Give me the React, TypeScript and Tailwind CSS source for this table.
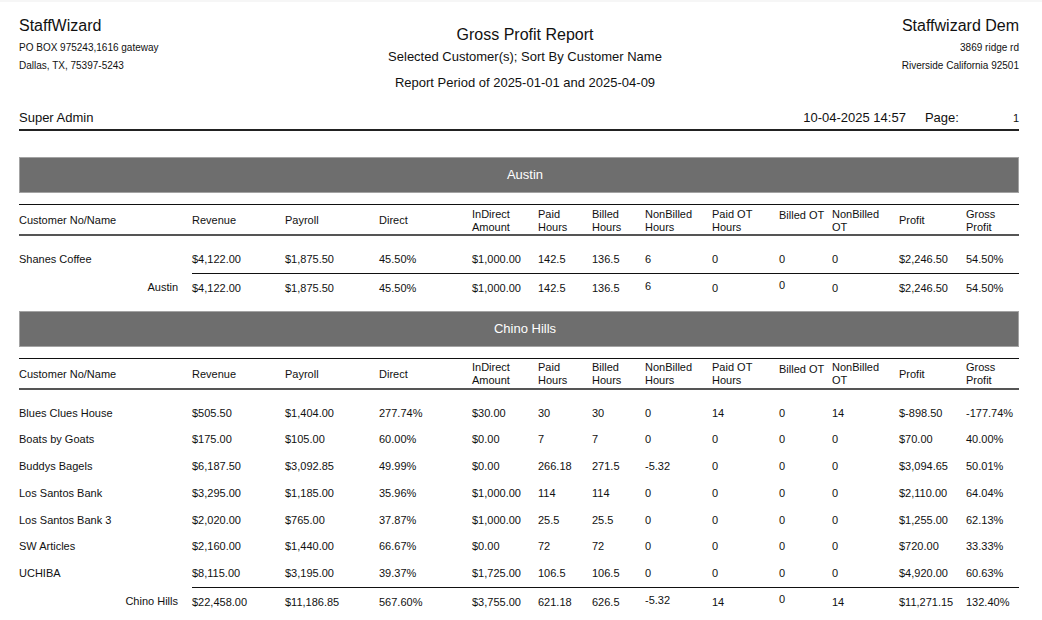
import React from 'react';

const cols =
  'grid grid-cols-[173px_93px_94px_93px_66px_54px_53px_67px_67px_53px_67px_67px_53px]';

type Row = string[];

const austinRows: Row[] = [
  ['Shanes Coffee', '$4,122.00', '$1,875.50', '45.50%', '$1,000.00', '142.5', '136.5', '6', '0', '0', '0', '$2,246.50', '54.50%'],
];
const austinTotal: Row = ['Austin', '$4,122.00', '$1,875.50', '45.50%', '$1,000.00', '142.5', '136.5', '6', '0', '0', '0', '$2,246.50', '54.50%'];

const chinoRows: Row[] = [
  ['Blues Clues House', '$505.50', '$1,404.00', '277.74%', '$30.00', '30', '30', '0', '14', '0', '14', '$-898.50', '-177.74%'],
  ['Boats by Goats', '$175.00', '$105.00', '60.00%', '$0.00', '7', '7', '0', '0', '0', '0', '$70.00', '40.00%'],
  ['Buddys Bagels', '$6,187.50', '$3,092.85', '49.99%', '$0.00', '266.18', '271.5', '-5.32', '0', '0', '0', '$3,094.65', '50.01%'],
  ['Los Santos Bank', '$3,295.00', '$1,185.00', '35.96%', '$1,000.00', '114', '114', '0', '0', '0', '0', '$2,110.00', '64.04%'],
  ['Los Santos Bank 3', '$2,020.00', '$765.00', '37.87%', '$1,000.00', '25.5', '25.5', '0', '0', '0', '0', '$1,255.00', '62.13%'],
  ['SW Articles', '$2,160.00', '$1,440.00', '66.67%', '$0.00', '72', '72', '0', '0', '0', '0', '$720.00', '33.33%'],
  ['UCHIBA', '$8,115.00', '$3,195.00', '39.37%', '$1,725.00', '106.5', '106.5', '0', '0', '0', '0', '$4,920.00', '60.63%'],
];
const chinoTotal: Row = ['Chino Hills', '$22,458.00', '$11,186.85', '567.60%', '$3,755.00', '621.18', '626.5', '-5.32', '14', '0', '14', '$11,271.15', '132.40%'];

const headers: { label: React.ReactNode; top?: boolean }[] = [
  { label: 'Customer No/Name' },
  { label: 'Revenue' },
  { label: 'Payroll' },
  { label: 'Direct' },
  { label: <>InDirect<br />Amount</> },
  { label: <>Paid<br />Hours</> },
  { label: <>Billed<br />Hours</> },
  { label: <>NonBilled<br />Hours</> },
  { label: <>Paid OT<br />Hours</> },
  { label: 'Billed OT', top: true },
  { label: <>NonBilled<br />OT</> },
  { label: 'Profit' },
  { label: <>Gross<br />Profit</> },
];

function Band({ name }: { name: string }) {
  return (
    <div className="h-[36px] bg-[#6e6e6e] border border-[#a3a3a3] flex items-center justify-center pl-[12px] text-white text-[13px]">
      {name}
    </div>
  );
}

function HeaderRow() {
  return (
    <div className={`${cols} mt-[11px] border-t-[1.5px] border-[#111] border-b-2 border-b-[#555] h-[32px] pt-[2px] text-[11px] leading-[13px]`}>
      {headers.map((h, i) => (
        <div key={i} className={`flex ${h.top ? 'items-start pt-[2px]' : 'items-center'}`}>
          <span>{h.label}</span>
        </div>
      ))}
    </div>
  );
}

function DataRow({ row }: { row: Row }) {
  return (
    <div className={`${cols} h-[26.7px] items-center text-[11px]`}>
      {row.map((c, i) => (
        <div key={i}>{c}</div>
      ))}
    </div>
  );
}

function TotalRow({ row }: { row: Row }) {
  return (
    <div className={`${cols} h-[28px] pt-[2px] items-center text-[11px]`}>
      <div className="text-right pr-[14px] pb-[3px]">{row[0]}</div>
      {row.slice(1).map((c, i) => (
        <div key={i} className={i === 6 ? 'pb-[5px]' : i === 8 ? 'pb-[7px]' : ''}>
          {c}
        </div>
      ))}
    </div>
  );
}

function Section({ name, rows, total }: { name: string; rows: Row[]; total: Row }) {
  return (
    <div>
      <Band name={name} />
      <HeaderRow />
      <div className="pt-[10px]">
        {rows.map((r, i) => (
          <DataRow key={i} row={r} />
        ))}
      </div>
      <div className="ml-[173px] border-t-[1.5px] border-[#111]" />
      <TotalRow row={total} />
    </div>
  );
}

export default function App() {
  return (
    <div className="w-[1042px] h-[620px] bg-white overflow-hidden border-t-2 border-[#f6f6f6] text-[#111]" style={{ fontFamily: '"Liberation Sans", Arial, sans-serif' }}>
      <div className="w-[1000px] ml-[19px] pt-[13px]">
        {/* Report heading */}
        <div className="grid grid-cols-[1fr_auto_1fr]">
          <div>
            <div className="text-[16px] leading-[20px] pt-[1px]">StaffWizard</div>
            <div className="text-[10px] leading-[18px] mt-[3px]">PO BOX 975243,1616 gateway</div>
            <div className="text-[10px] leading-[18px]">Dallas, TX, 75397-5243</div>
          </div>
          <div className="text-center pl-[12px] pt-[10px]">
            <div className="text-[16px] leading-[20px]">Gross Profit Report</div>
            <div className="text-[13px] leading-[18px] mt-[3px]">Selected Customer(s); Sort By Customer Name</div>
            <div className="text-[13px] leading-[18px] mt-[8px]">Report Period of 2025-01-01 and 2025-04-09</div>
          </div>
          <div className="text-right">
            <div className="text-[16px] leading-[20px] pt-[1px]">Staffwizard Dem</div>
            <div className="text-[10px] leading-[18px] mt-[3px]">3869 ridge rd</div>
            <div className="text-[10px] leading-[18px]">Riverside California 92501</div>
          </div>
        </div>

        <div className="mt-[18px] flex items-center justify-between h-[16px] text-[13px] leading-[16px]">
          <span>Super Admin</span>
          <div className="flex items-center">
            <span>10-04-2025 14:57</span>
            <span className="ml-[19px] w-[88px]">Page:</span>
            <span className="text-[11px]">1</span>
          </div>
        </div>
        <div className="mt-[3px] border-t-2 border-[#222]" />

        <div className="mt-[26px]">
          <Section name="Austin" rows={austinRows} total={austinTotal} />
        </div>
        <div className="mt-[9px]">
          <Section name="Chino Hills" rows={chinoRows} total={chinoTotal} />
        </div>
      </div>
    </div>
  );
}
